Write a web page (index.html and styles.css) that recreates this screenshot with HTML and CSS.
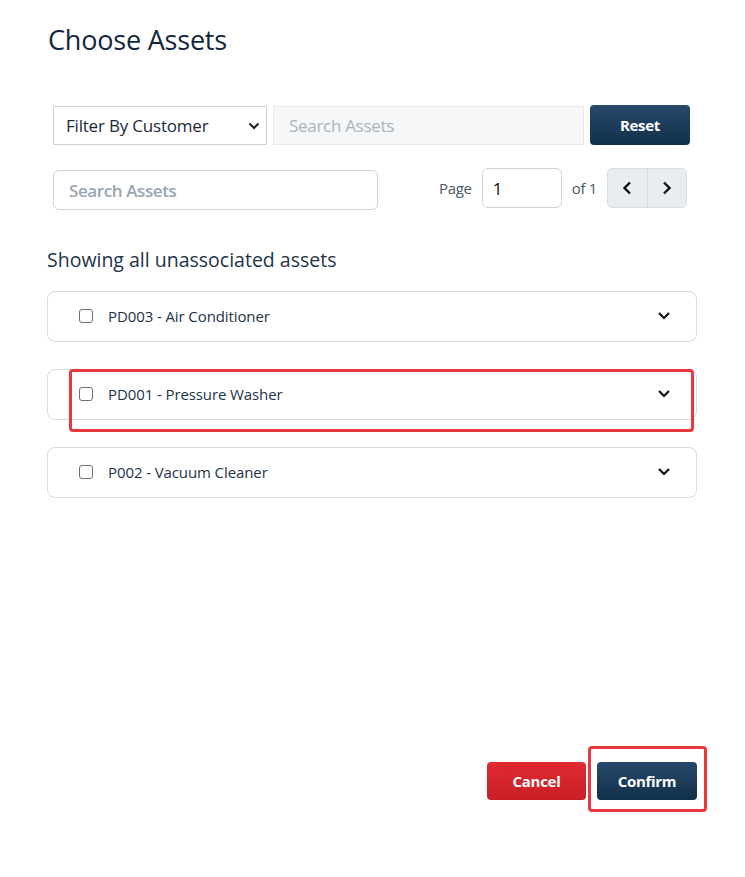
FILE: index.html
```html
<!DOCTYPE html>
<html lang="en">
<head>
  <meta charset="UTF-8">
  <meta name="viewport" content="width=device-width, initial-scale=1.0">
  <title>Choose Assets</title>
  <link rel="stylesheet" href="styles.css">
</head>
<body>
  <div class="modal">
    <h1>Choose Assets</h1>

    <div class="filter-row">
      <div class="select-box">
        <span>Filter By Customer</span>
        <svg width="12" height="8" viewBox="0 0 12 8"><path d="M1.5 1.5 6 6l4.5-4.5" fill="none" stroke="#222" stroke-width="2"/></svg>
      </div>
      <input type="text" class="search-disabled" placeholder="Search Assets" disabled>
      <button type="button" class="btn btn-dark btn-reset">Reset</button>
    </div>

    <div class="search-row">
      <input type="text" class="search" placeholder="Search Assets">
      <div class="pager">
        <span class="pager-label">Page</span>
        <input type="text" class="page-input" value="1">
        <span class="pager-label">of 1</span>
        <div class="pager-btns">
          <button type="button"><svg width="10" height="14" viewBox="0 0 10 14"><path d="M8 1.5 2.5 7 8 12.5" fill="none" stroke="#111" stroke-width="2.4"/></svg></button>
          <button type="button"><svg width="10" height="14" viewBox="0 0 10 14"><path d="M2 1.5 7.5 7 2 12.5" fill="none" stroke="#111" stroke-width="2.4"/></svg></button>
        </div>
      </div>
    </div>

    <h2>Showing all unassociated assets</h2>

    <div class="asset-list">
      <div class="asset">
        <span class="check"></span>
        <span class="asset-name">PD003 - Air Conditioner</span>
        <svg class="chevron" width="14" height="9" viewBox="0 0 14 9"><path d="M2 2l5 5 5-5" fill="none" stroke="#111" stroke-width="2.2"/></svg>
      </div>
      <div class="asset">
        <span class="check"></span>
        <span class="asset-name">PD001 - Pressure Washer</span>
        <svg class="chevron" width="14" height="9" viewBox="0 0 14 9"><path d="M2 2l5 5 5-5" fill="none" stroke="#111" stroke-width="2.2"/></svg>
        <div class="highlight highlight-row"></div>
      </div>
      <div class="asset">
        <span class="check"></span>
        <span class="asset-name">P002 - Vacuum Cleaner</span>
        <svg class="chevron" width="14" height="9" viewBox="0 0 14 9"><path d="M2 2l5 5 5-5" fill="none" stroke="#111" stroke-width="2.2"/></svg>
      </div>
    </div>

    <div class="footer">
      <button type="button" class="btn btn-red">Cancel</button>
      <div class="confirm-wrap">
        <button type="button" class="btn btn-dark btn-confirm">Confirm</button>
        <div class="highlight highlight-btn"></div>
      </div>
    </div>
  </div>
</body>
</html>
```

FILE: styles.css
```css
body {
  margin: 0;
  font-family: 'Open Sans', 'Noto Sans', sans-serif;
  background: #fff;
  color: #1e3347;
}
.modal {
  width: 650px;
  padding: 22px 0 70px 47px;
}
h1 {
  margin: 0 0 0 1px;
  font-size: 27px;
  font-weight: 500;
  color: #16263a;
  line-height: 36px;
  letter-spacing: -0.2px;
}
.filter-row {
  display: flex;
  align-items: center;
  gap: 6px;
  margin: 48px 0 0 6px;
  width: 637px;
}
.select-box {
  box-sizing: border-box;
  width: 214px;
  height: 39px;
  border: 1px solid #c9d0d8;
  display: flex;
  align-items: center;
  justify-content: space-between;
  padding: 0 6px 0 12px;
  font-size: 17px;
  color: #1b2a3a;
  letter-spacing: -0.2px;
}
.search-disabled {
  box-sizing: border-box;
  width: 311px;
  height: 39px;
  border: 1px solid #e6eaee;
  background: #f5f7f9;
  padding: 0 15px;
  font: inherit;
  font-size: 17px;
  letter-spacing: -0.3px;
}
.search-disabled::placeholder {
  color: #a9b3bd;
}
.btn {
  border: none;
  border-radius: 4px;
  color: #fff;
  font-family: 'Open Sans', 'Noto Sans', sans-serif;
  font-weight: 700;
  font-size: 15px;
  letter-spacing: -0.3px;
  cursor: pointer;
}
.btn-dark {
  background: linear-gradient(#27496a, #11304a);
}
.btn-reset {
  width: 100px;
  height: 40px;
  margin-top: -1px;
}
.search-row {
  display: flex;
  align-items: center;
  justify-content: space-between;
  margin: 21px 0 0 6px;
  width: 634px;
}
.search {
  box-sizing: border-box;
  width: 325px;
  height: 40px;
  margin-top: 4px;
  border: 1px solid #cdd4dc;
  border-radius: 6px;
  padding: 0 15px;
  font: inherit;
  font-size: 17px;
  font-weight: 600;
  letter-spacing: -0.4px;
}
.search::placeholder {
  color: #98a5b2;
}
.pager {
  display: flex;
  align-items: center;
  gap: 10px;
}
.pager-label {
  font-size: 15px;
  color: #4a5866;
  letter-spacing: -0.3px;
}
.page-input {
  box-sizing: border-box;
  width: 80px;
  height: 40px;
  border: 1px solid #cdd4dc;
  border-radius: 6px;
  padding: 0 10px;
  font: inherit;
  font-size: 17px;
  color: #111;
}
.pager-btns {
  display: flex;
  width: 80px;
  height: 40px;
  border: 1px solid #d6dce2;
  border-radius: 5px;
  background: #e9edf1;
  box-sizing: border-box;
  overflow: hidden;
}
.pager-btns button {
  flex: 1;
  border: none;
  background: transparent;
  display: flex;
  align-items: center;
  justify-content: center;
  padding: 0;
}
.pager-btns button + button {
  border-left: 1px solid #d3d9df;
}
h2 {
  margin: 37px 0 0;
  font-size: 19.5px;
  font-weight: 500;
  color: #1e3347;
  letter-spacing: 0;
  line-height: 26px;
}
.asset-list {
  display: flex;
  flex-direction: column;
  gap: 27px;
  margin-top: 18px;
}
.asset {
  position: relative;
  box-sizing: border-box;
  height: 51px;
  border: 1px solid #d5dce4;
  border-radius: 8px;
  display: flex;
  align-items: center;
  padding: 0 25px 2px 31px;
}
.check {
  box-sizing: border-box;
  width: 14px;
  height: 14px;
  border: 1px solid #6b6f74;
  border-radius: 3px;
  margin-right: 15px;
}
.asset-name {
  flex: 1;
  font-size: 15px;
  color: #1e3347;
  letter-spacing: -0.1px;
}
.highlight {
  position: absolute;
  box-sizing: border-box;
  border: 3px solid #e8383d;
  border-radius: 4px;
  pointer-events: none;
}
.highlight-row {
  left: 21px;
  top: -1px;
  width: 625px;
  height: 63px;
}
.footer {
  display: flex;
  justify-content: flex-end;
  gap: 11px;
  margin-top: 264px;
}
.btn-red {
  width: 99px;
  height: 38px;
  background: linear-gradient(#e02a30, #c81f26);
}
.confirm-wrap {
  position: relative;
}
.btn-confirm {
  width: 100px;
  height: 38px;
}
.highlight-btn {
  left: -9px;
  top: -16px;
  width: 119px;
  height: 66px;
}
```
